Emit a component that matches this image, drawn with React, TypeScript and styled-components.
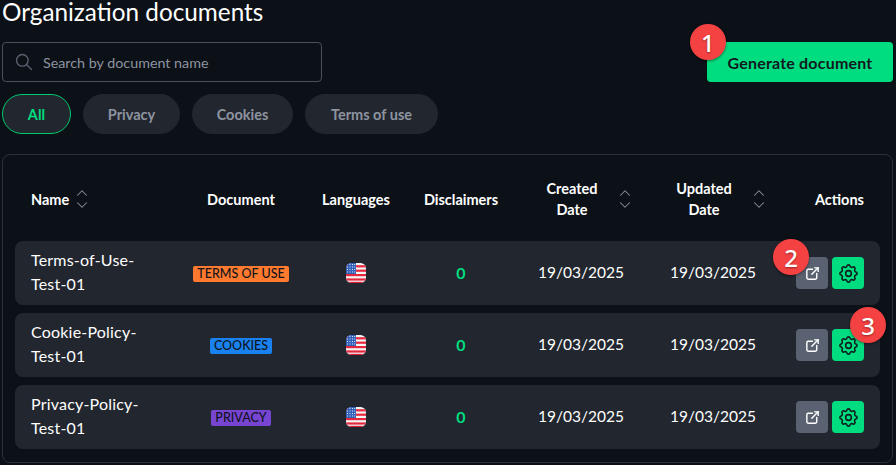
import React from "react";
import styled, { createGlobalStyle } from "styled-components";
import { TbSettings, TbExternalLink, TbChevronUp, TbChevronDown, TbSearch } from "react-icons/tb";

const Global = createGlobalStyle`
  html, body { margin: 0; padding: 0; background: #0c1017; height: 465px; overflow: hidden; }
  * { box-sizing: border-box; }
`;

const Page = styled.div`
  width: 896px; height: 465px; overflow: hidden;
  padding: 0 3px 0 2px;
  font-family: "Lato", "Noto Sans", sans-serif;
  color: #fff;
  background: #0c1017;
`;
const Top = styled.div`display: flex; justify-content: space-between; align-items: flex-start;`;
const TopLeft = styled.div`display: flex; flex-direction: column;`;
const Title = styled.h1`
  margin: 0; height: 42px; font-size: 24.3px; line-height: 24px; font-weight: 400; color: #fff;
`;
const Search = styled.div`
  width: 320px; height: 40px; border: 1px solid #4a505c; border-radius: 4px;
  display: flex; align-items: center; gap: 9px; padding-left: 11px;
  color: #8d94a0; font-size: 14.3px;
  svg { color: #596170; }
`;
const Tabs = styled.div`display: flex; gap: 12px; margin-top: 12px;`;
const Tab = styled.div<{ $active?: boolean; $w: number }>`
  width: ${p => p.$w}px; height: 40px; border-radius: 20px;
  display: flex; align-items: center; justify-content: center;
  background: #22262e;
  border: 1px solid ${p => (p.$active ? "#00c96f" : "#22262e")};
  color: ${p => (p.$active ? "#00dd80" : "#8d94a0")};
  font-size: 14.5px; font-weight: 700;
`;
const Generate = styled.div`
  position: relative; margin-top: 42px; width: 186px; height: 40px; border-radius: 4px;
  background: #00dd80; color: #111821;
  display: flex; align-items: center; justify-content: center;
  font-size: 16px; font-weight: 700; letter-spacing: 0.2px;
`;
const Marker = styled.div<{ $top: number; $left: number }>`
  position: absolute; top: ${p => p.$top}px; left: ${p => p.$left}px; z-index: 3;
  width: 36px; height: 36px; border-radius: 50%;
  background: #f44141; color: #fff;
  display: flex; align-items: center; justify-content: center;
  font-family: "Noto Sans", sans-serif;
  font-size: 24px; font-weight: 500;
  box-shadow: 0 1px 3px rgba(0,0,0,.45);
  text-shadow: 0 1px 2px rgba(0,0,0,.4);
`;
const Card = styled.div`
  margin-top: 20px; height: 309px; border: 1px solid #2b303a; border-radius: 8px;
  padding: 0 12px;
`;
const Columns = `
  display: grid;
  grid-template-columns: 152px 148px 82px 128px 112px 152px 91px;
  align-items: center;
`;
const HeadRow = styled.div`
  ${Columns}
  height: 86px; padding-top: 2px;
  font-size: 14.5px; font-weight: 700; color: #fff;
`;
const HeadCell = styled.div<{ $pad?: number; $justify?: string }>`
  display: flex; align-items: center;
  justify-content: ${p => p.$justify || "center"};
  padding-left: ${p => p.$pad || 0}px;
  line-height: 21px;
`;
const RightHead = styled(HeadCell)`padding-right: 16px;`;
const DateHead = styled.span<{ $w: number; $gap: number }>`
  width: ${p => p.$w}px; margin-right: ${p => p.$gap}px; text-align: center;
`;
const SortWrap = styled.span`
  display: inline-flex; flex-direction: column; width: 14px; align-items: center; color: #8b909a;
  svg { display: block; margin: -3px 0; }
`;
const NameHead = styled.span`margin-right: 6px;`;
const Rows = styled.div`display: flex; flex-direction: column; gap: 8px;`;
const Row = styled.div`
  ${Columns}
  height: 64px; padding-bottom: 2px; background: #22262e; border-radius: 8px;
  font-size: 15.5px; color: #fff;
`;
const NameCell = styled.div`padding-left: 16px; line-height: 24px; width: 140px; font-size: 16px; letter-spacing: 0.2px;`;
const Center = styled.div`display: flex; justify-content: center; align-items: center;`;
const Badge = styled.span<{ $bg: string }>`
  background: ${p => p.$bg}; color: #10141c; border-radius: 2px; margin-top: 3px;
  font-size: 12.5px; font-weight: 500; line-height: 16px; height: 16px; padding: 0 4px;
`;
const Count = styled.span`color: #00dd80; font-weight: 700; font-size: 16px;`;
const FlagCell = styled(Center)`margin-top: 2px;`;
const Actions = styled.div`display: flex; gap: 4px; padding-left: 7px; margin-top: 2px;`;
const ActionBtn = styled.div<{ $green?: boolean }>`
  position: relative; width: 32px; height: 32px; border-radius: 4px;
  display: flex; align-items: center; justify-content: center;
  background: ${p => (p.$green ? "#00dd80" : "#5a6272")};
  color: ${p => (p.$green ? "#0e1a1c" : "#fff")};
`;
const FlagSvg = styled.svg`display: block;`;

const Flag = () => (
  <FlagSvg width="20" height="20" viewBox="0 0 20 20">
    <defs>
      <clipPath id="flagClip"><rect width="20" height="20" rx="5.5" /></clipPath>
    </defs>
    <g clipPath="url(#flagClip)">
      <rect width="20" height="20" fill="#f5f5f5" />
      <rect y="2.2" width="20" height="2.2" fill="#e4273c" />
      <rect y="6.6" width="20" height="2.2" fill="#e4273c" />
      <rect y="11" width="20" height="2.2" fill="#e4273c" />
      <rect y="15.4" width="20" height="2.2" fill="#e4273c" />
      <rect y="18.8" width="20" height="1.2" fill="#d81f34" />
      <rect width="10" height="11" fill="#2f5fb8" />
      {[1.5, 4, 6.5, 9].map(y => [1.5, 4, 6.5, 8.7].map(x => (
        <rect key={`${x}-${y}`} x={x - 0.5} y={y - 0.5} width="1" height="1" fill="#dfe8f7" />
      )))}
    </g>
  </FlagSvg>
);

const Sort = () => (
  <SortWrap>
    <TbChevronUp size={18} strokeWidth={1.4} />
    <TbChevronDown size={18} strokeWidth={1.4} />
  </SortWrap>
);

const docs = [
  { a: "Terms-of-Use-", label: "TERMS OF USE", bg: "#ff7a2e" },
  { a: "Cookie-Policy-", label: "COOKIES", bg: "#1a82f0" },
  { a: "Privacy-Policy-", label: "PRIVACY", bg: "#7845d2" },
];

export default function App() {
  return (
    <Page>
      <Global />
      <Top>
        <TopLeft>
          <Title>Organization documents</Title>
          <Search><TbSearch size={20} strokeWidth={1.6} />Search by document name</Search>
          <Tabs>
            <Tab $active $w={69}>All</Tab>
            <Tab $w={97}>Privacy</Tab>
            <Tab $w={101}>Cookies</Tab>
            <Tab $w={133}>Terms of use</Tab>
          </Tabs>
        </TopLeft>
        <Generate>
          <Marker $top={-18} $left={-17}>1</Marker>
          Generate document
        </Generate>
      </Top>
      <Card>
        <HeadRow>
          <HeadCell $justify="flex-start" $pad={16}><NameHead>Name</NameHead><Sort /></HeadCell>
          <HeadCell>Document</HeadCell>
          <HeadCell>Languages</HeadCell>
          <HeadCell>Disclaimers</HeadCell>
          <HeadCell $justify="flex-start" $pad={18}><DateHead $w={58} $gap={17}>Created Date</DateHead><Sort /></HeadCell>
          <HeadCell $justify="flex-start" $pad={36}><DateHead $w={62} $gap={17}>Updated Date</DateHead><Sort /></HeadCell>
          <RightHead $justify="flex-end">Actions</RightHead>
        </HeadRow>
        <Rows>
          {docs.map((d, i) => (
            <Row key={d.label}>
              <NameCell>{d.a}<br />Test-01</NameCell>
              <Center><Badge $bg={d.bg}>{d.label}</Badge></Center>
              <FlagCell><Flag /></FlagCell>
              <Center><Count>0</Count></Center>
              <Center>19/03/2025</Center>
              <Center>19/03/2025</Center>
              <Actions>
                <ActionBtn>
                  {i === 0 && <Marker $top={-18} $left={-23}>2</Marker>}
                  <TbExternalLink size={17} strokeWidth={2} />
                </ActionBtn>
                <ActionBtn $green>
                  {i === 1 && <Marker $top={-22} $left={18}>3</Marker>}
                  <TbSettings size={23} strokeWidth={1.6} />
                </ActionBtn>
              </Actions>
            </Row>
          ))}
        </Rows>
      </Card>
    </Page>
  );
}
